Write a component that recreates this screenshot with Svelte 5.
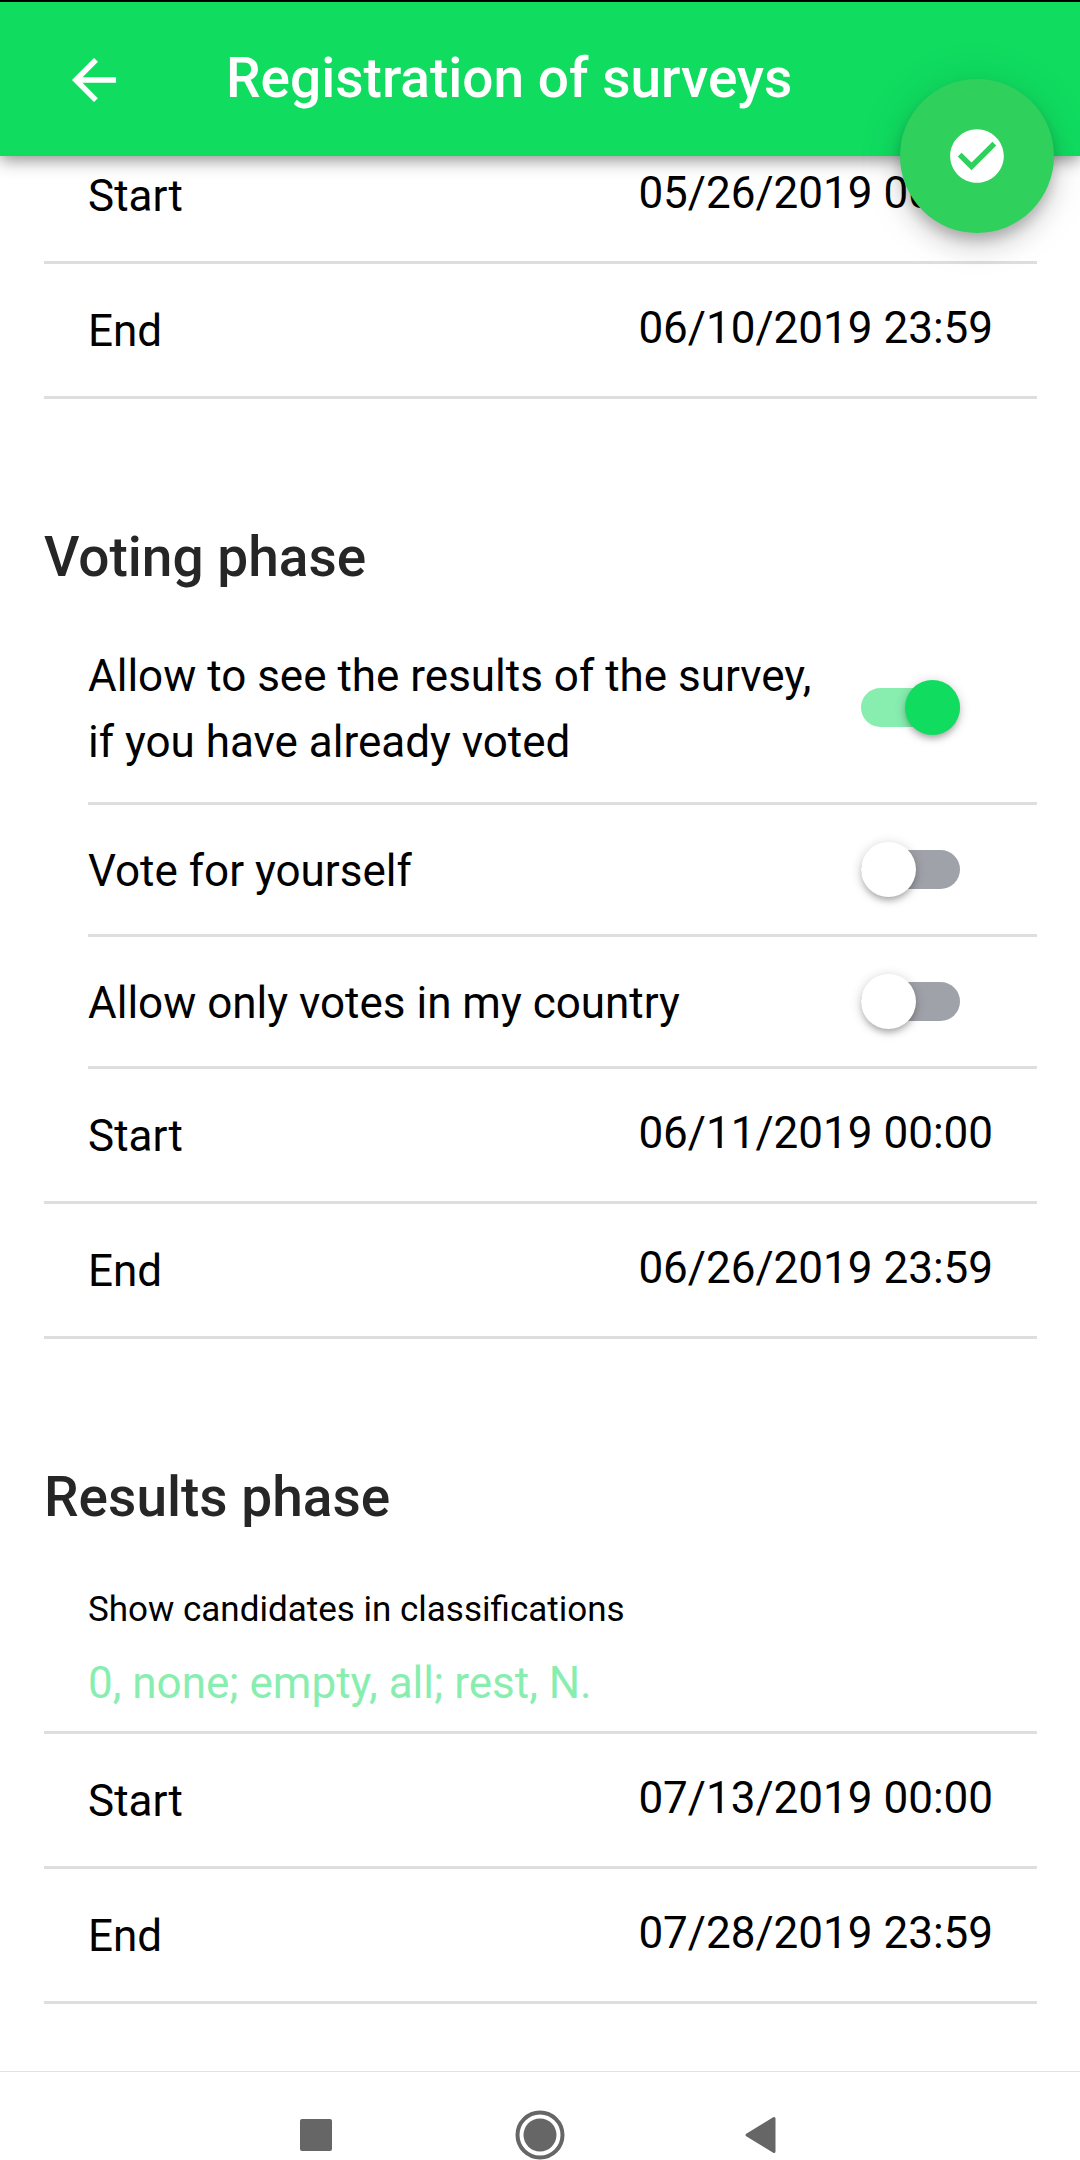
<script>
  let allowResults = $state(true);
  let voteSelf = $state(false);
  let onlyCountry = $state(false);
  let candidates = $state('');

  const upload = [
    { id: 'upload-start', label: 'Start', value: '05/26/2019 00:00' },
    { id: 'upload-end', label: 'End', value: '06/10/2019 23:59' }
  ];
  const voting = [
    { id: 'voting-start', label: 'Start', value: '06/11/2019 00:00' },
    { id: 'voting-end', label: 'End', value: '06/26/2019 23:59' }
  ];
  const results = [
    { id: 'results-start', label: 'Start', value: '07/13/2019 00:00' },
    { id: 'results-end', label: 'End', value: '07/28/2019 23:59' }
  ];
</script>

{#snippet dateRow(row)}
  <div class="date-row">
    <label for={row.id}>{row.label}</label>
    <button type="button" id={row.id} class="date">{row.value}</button>
  </div>
{/snippet}

<header>
  <button type="button" class="back" aria-label="Back">
    <svg viewBox="0 0 512 512" width="66" height="66" fill="currentColor">
      <path d="M427 234.625H167.296l119.702-119.702L256 85 85 256l171 171 29.922-29.924-118.626-119.701H427v-42.75z" />
    </svg>
  </button>
  <h1>Registration of surveys</h1>
  <button type="button" class="fab" aria-label="Save">
    <svg viewBox="0 0 512 512" width="66" height="66" fill="currentColor">
      <path d="M256 48C141.6 48 48 141.6 48 256s93.6 208 208 208 208-93.6 208-208S370.4 48 256 48zm-42.7 318.9L106.700 260.3l29.9-29.9 76.8 76.8 162.1-162.1 29.9 29.9-192.1 191.9z" />
    </svg>
  </button>
</header>

<main>
  <section>
    {#each upload as row}
      {@render dateRow(row)}
    {/each}
  </section>

  <section>
    <h2>Voting phase</h2>
    <label class="toggle-row">
      <span>Allow to see the results of the survey, if you have already voted</span>
      <input type="checkbox" class="toggle" bind:checked={allowResults} />
    </label>
    <label class="toggle-row">
      <span>Vote for yourself</span>
      <input type="checkbox" class="toggle" bind:checked={voteSelf} />
    </label>
    <label class="toggle-row">
      <span>Allow only votes in my country</span>
      <input type="checkbox" class="toggle" bind:checked={onlyCountry} />
    </label>
    {#each voting as row}
      {@render dateRow(row)}
    {/each}
  </section>

  <section>
    <h2>Results phase</h2>
    <div class="input-row">
      <label for="candidates">Show candidates in classifications</label>
      <input id="candidates" type="text" placeholder="0, none; empty, all; rest, N." bind:value={candidates} />
    </div>
    {#each results as row}
      {@render dateRow(row)}
    {/each}
  </section>
</main>

<nav>
  <button type="button" aria-label="Recent apps">
    <svg viewBox="0 0 50 50" width="50" height="50">
      <rect x="9" y="9" width="32" height="32" rx="2" fill="#666" />
    </svg>
  </button>
  <button type="button" aria-label="Home">
    <svg viewBox="0 0 50 50" width="50" height="50">
      <circle cx="25" cy="25" r="22.5" fill="none" stroke="#666" stroke-width="4" />
      <circle cx="25" cy="25" r="16.5" fill="#666" />
    </svg>
  </button>
  <button type="button" aria-label="Back">
    <svg viewBox="0 0 50 50" width="50" height="50">
      <path d="M8 25 35 8.500V41.500Z" fill="#666" stroke="#666" stroke-width="3" stroke-linejoin="round" />
    </svg>
  </button>
</nav>

<style>
  :global(body) {
    background: #fff;
    color: #000;
    font-family: Roboto, sans-serif;
    font-size: 44px;
  }

  button,
  input {
    margin: 0;
    padding: 0;
    border: 0;
    background: none;
    color: inherit;
    font: inherit;
  }

  svg {
    display: block;
  }

  header {
    position: fixed;
    top: 0;
    left: 0;
    right: 0;
    z-index: 2;
    display: flex;
    align-items: center;
    gap: 99px;
    box-sizing: border-box;
    height: 156px;
    padding: 2px 0 0 61px;
    border-top: 2px solid #000;
    background: #10dc60;
    color: #fff;
    box-shadow: 0 4px 16px rgba(0, 0, 0, 0.45);
  }

  h1,
  h2 {
    margin: 0;
    font-size: 55px;
    font-weight: 500;
    line-height: 66px;
  }

  h1 {
    padding-bottom: 4px;
  }

  /* floating button sits on the lower edge of the header */
  .fab {
    position: absolute;
    right: 26px;
    bottom: -77px;
    display: grid;
    place-items: center;
    width: 154px;
    height: 154px;
    border-radius: 50%;
    background: #2fd05c;
    box-shadow:
      0 8px 14px -2px rgba(0, 0, 0, 0.22),
      0 14px 28px rgba(0, 0, 0, 0.14),
      0 3px 48px rgba(0, 0, 0, 0.1);
  }

  main {
    padding: 129px 43px 156px 44px;
  }

  h2 {
    padding: 125px 0 23px;
    color: #262626;
  }

  .date-row {
    display: flex;
    align-items: flex-start;
    justify-content: space-between;
    padding: 34px 44px 32px;
    border-bottom: 3px solid #dedede;
    line-height: 66px;
  }

  .date {
    line-height: 60px;
  }

  .toggle-row {
    display: flex;
    align-items: center;
    justify-content: space-between;
    gap: 44px;
    box-sizing: border-box;
    min-height: 132px;
    margin-left: 44px;
    padding: 27px 77px 27px 0;
    border-bottom: 3px solid #dedede;
    line-height: 66px;
  }

  .toggle-row span {
    padding-top: 3px;
  }

  .toggle {
    appearance: none;
    flex: none;
    display: flex;
    align-items: center;
    width: 99px;
    height: 39px;
    border-radius: 20px;
    background: #a0a2aa;
  }

  .toggle::before {
    content: '';
    flex: none;
    width: 55px;
    height: 55px;
    border-radius: 50%;
    background: #fff;
    box-shadow:
      0 5px 6px -2px rgba(0, 0, 0, 0.24),
      0 2px 12px rgba(0, 0, 0, 0.2);
  }

  .toggle:checked {
    justify-content: flex-end;
    background: #88eeb0;
  }

  .toggle:checked::before {
    background: #10dc60;
  }

  .input-row {
    display: flex;
    flex-direction: column;
    gap: 21px;
    padding: 31px 44px 22px;
    border-bottom: 3px solid #dedede;
    line-height: 52px;
  }

  .input-row label {
    font-size: 35px;
  }

  .input-row input {
    height: 52px;
    outline: none;
  }

  .input-row input::placeholder {
    color: #88eeb0;
    opacity: 1;
  }

  nav {
    position: fixed;
    left: 0;
    right: 0;
    bottom: 0;
    z-index: 2;
    display: flex;
    justify-content: center;
    gap: 174px;
    padding: 38px 0 0;
    border-top: 1px solid #e2e2e2;
    background: #fff;
  }
</style>
